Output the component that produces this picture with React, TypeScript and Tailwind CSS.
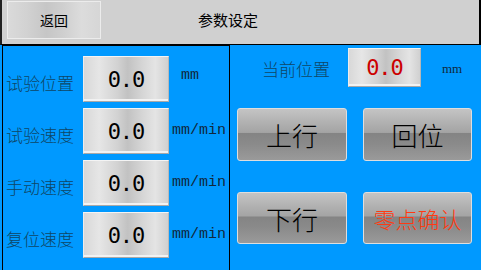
const cjk = "font-['Noto_Sans_CJK_SC',sans-serif]"

const fieldBox =
  "flex items-center justify-center border border-t-[#f4f4f4] border-l-[#ececec] border-r-[#b8b8b8] border-b-[#a8a8a8] bg-[linear-gradient(to_right,#d8d8d8_0%,#e6e6e6_18%,#d2d2d2_40%,#c2c2c2_52%,#d6d6d6_70%,#e4e4e4_85%,#d0d0d0_100%)] shadow-[inset_0_-4px_0_-2px_#f2f2f2]"

const btn =
  "flex items-center justify-center rounded-[3px] border border-[#dedede] bg-[linear-gradient(to_bottom,#c4c4c4_0%,#b2b2b2_25%,#a4a4a4_46%,#848484_48%,#8a8a8a_68%,#9a9a9a_100%)]"

const rows = [
  { label: "试验位置", unit: "mm" },
  { label: "试验速度", unit: "mm/min" },
  { label: "手动速度", unit: "mm/min" },
  { label: "复位速度", unit: "mm/min" },
]

export default function App() {
  return (
    <div className="w-[481px] h-[270px] overflow-hidden bg-[#0099ff] flex flex-col">
      {/* 顶部栏 */}
      <div className="h-[45px] shrink-0 bg-[#d0d0d0] border-l-2 border-l-[#202020] border-r-2 border-r-black border-b border-b-black flex items-start">
        <button
          className={`ml-[5px] mt-[1px] w-[94px] h-[38px] flex items-center justify-center border border-[#ececec] bg-[linear-gradient(to_right,#dadada_0%,#d2d2d2_20%,#c6c6c6_42%,#cfcfcf_60%,#dcdcdc_80%,#d6d6d6_100%)] text-[14px] text-black ${cjk}`}
        >
          返回
        </button>
        <div className={`ml-[97px] mt-[9px] text-[15px] text-black ${cjk}`}>参数设定</div>
      </div>

      <div className="flex flex-1 min-h-0">
        {/* 左侧参数 */}
        <div className="ml-[2px] w-[228px] border border-black border-b-0 pt-[10px] flex flex-col gap-[6px]">
          {rows.map((r) => (
            <div key={r.label} className="flex items-center h-[46px]">
              <div className={`w-[80px] pl-[3px] pt-[7px] text-[17px] leading-none font-light text-[#0f4666] ${cjk}`}>
                {r.label}
              </div>
              <div className={`w-[86px] h-[46px] ${fieldBox}`}>
                <span className="font-['DejaVu_Sans_Mono',monospace] text-[22px] text-black tracking-[-1px]">0.0</span>
              </div>
              <div
                className={`${r.unit === "mm" ? "ml-[12px] -mt-[6px]" : "ml-[3px]"} font-['Liberation_Mono',monospace] text-[15px] text-[#10283c]`}
              >
                {r.unit}
              </div>
            </div>
          ))}
        </div>

        {/* 右侧操作 */}
        <div className="flex-1 flex flex-col">
          <div className="flex items-center h-[39px] mt-[3px]">
            <div className={`pl-[32px] w-[118px] pt-[2px] text-[17px] leading-none font-light text-[#0f4666] ${cjk}`}>当前位置</div>
            <div className={`w-[73px] h-[39px] ${fieldBox}`}>
              <span className="font-['DejaVu_Sans_Mono',monospace] text-[22px] text-[#cc0000] tracking-[-1px]">0.0</span>
            </div>
            <div className="ml-[21px] pt-[2px] font-['Liberation_Serif',serif] text-[13px] text-[#10283c]">mm</div>
          </div>

          <div className="mt-[21px] pl-[7px] grid grid-cols-[110px_109px] gap-x-[16px] gap-y-[31px]">
            <button className={`h-[53px] ${btn} text-[26px] font-light text-black ${cjk}`}>上行</button>
            <button className={`h-[53px] ${btn} text-[26px] font-light text-black ${cjk}`}>回位</button>
            <button className={`h-[52px] ${btn} text-[26px] font-light text-black ${cjk}`}>下行</button>
            <button className={`h-[52px] ${btn} text-[22px] font-light text-[#ff3a12] ${cjk}`}>零点确认</button>
          </div>
        </div>
      </div>
    </div>
  )
}
